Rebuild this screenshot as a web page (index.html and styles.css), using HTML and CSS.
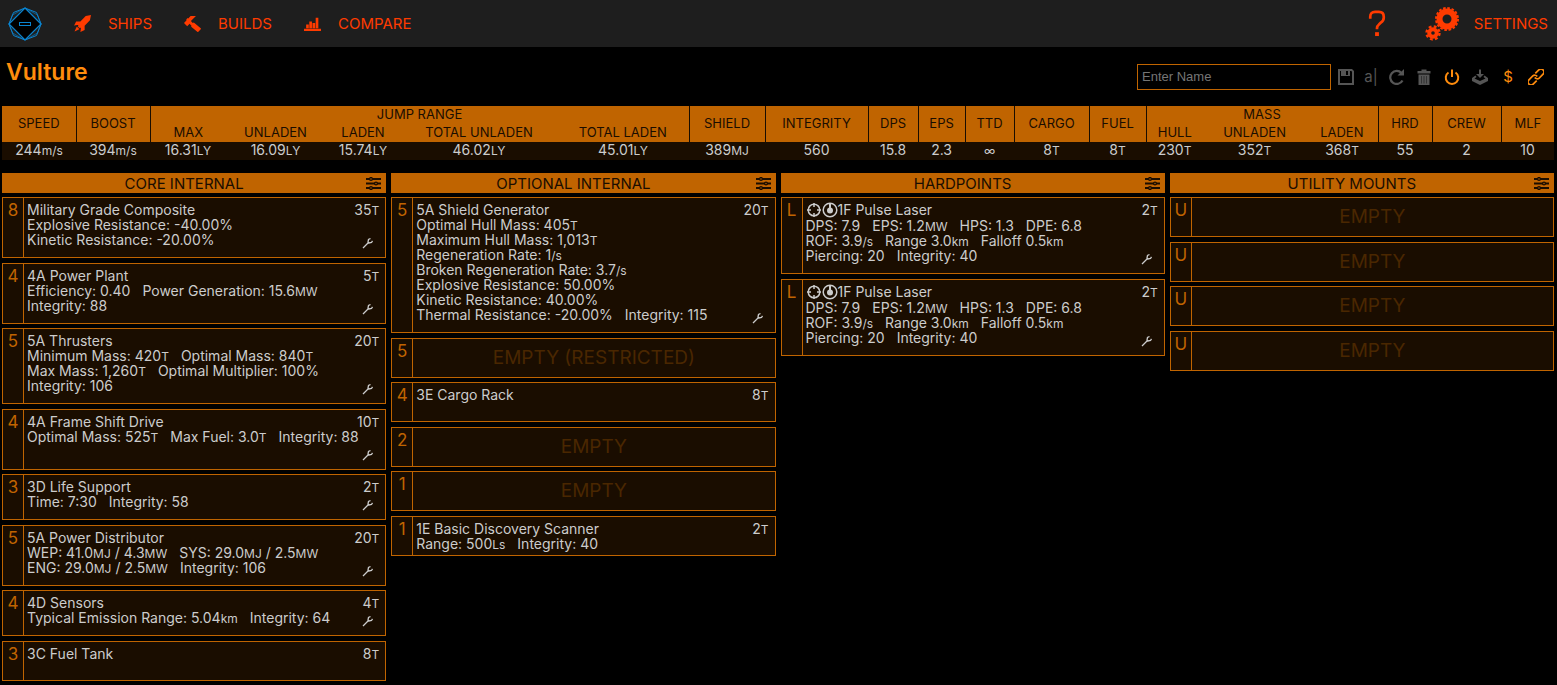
FILE: index.html
```
<!DOCTYPE html>
<html lang="en">
<head>
    <meta charset="utf-8">
    <title>Vulture</title>
    <link rel="stylesheet" href="styles.css">
</head>
<body>
    <!-- Icons -->
    <svg class="sprite" aria-hidden="true">
        <symbol id="i-logo" viewBox="0 0 34 34">
            <path d="M17 1 28.500 5.500 33 17 28.500 28.500 17 33 5.500 28.500 1 17 5.500 5.500Z" fill="none" stroke="#0a84d0"/>
            <path d="M17 1 33 17 17 33 1 17Z" fill="#000" stroke="#0a84d0" stroke-width="1.200"/>
            <path d="M17 1 29.500 8 33 17 29.500 26 17 33 4.500 26 1 17 4.500 8Z" fill="none" stroke="#0a84d0" stroke-width=".6"/>
            <rect x="11.500" y="15.500" width="11" height="3" fill="none" stroke="#0a84d0"/>
        </symbol>
        <symbol id="i-rocket" viewBox="0 0 32 32">
            <path d="M22 2 12 12H4l-4 8s5-1 8.500-1l-1.500 2 4 4 2-1.500C13 27 12 32 12 32l8-4v-8l10-10L32 0Z"/>
            <path d="M5 22 1 31l9-4-2-3Z"/>
        </symbol>
        <symbol id="i-hammer" viewBox="0 0 32 32">
            <path d="M31.500 25 18.500 14l-2 1-3.500-3.500L22.500 2H12.500L8 6.500 7 5.500 4.500 8v2.500L0 15l6 6 4.500-4.500 3.500 3.500-.500 2L25 31.500q1 .8 2 0l4.500-4.500q.8-1 0-2Z"/>
        </symbol>
        <symbol id="i-bars" viewBox="0 0 32 32">
            <path d="M0 26h32v4H0ZM4 18h5v7H4ZM10 12h5v13h-5ZM16 15h5v10h-5ZM22 5h5v20h-5Z"/>
        </symbol>
        <symbol id="i-cogs" viewBox="0 0 34 34">
            <circle cx="22" cy="12" r="7.500" fill="none" stroke="currentColor" stroke-width="6"/>
            <circle cx="22" cy="12" r="11" fill="none" stroke="currentColor" stroke-width="2" stroke-dasharray="2.600 1.720"/>
            <circle cx="8" cy="26" r="3.800" fill="none" stroke="currentColor" stroke-width="4"/>
            <circle cx="8" cy="26" r="6.500" fill="none" stroke="currentColor" stroke-width="2.400" stroke-dasharray="2.800 2.305"/>
        </symbol>
        <symbol id="i-question" viewBox="0 0 18 28">
            <path d="M2 9V7q0-5 5-5h4q5 0 5 5v1q0 3-3 5l-2 2q-2 1.500-2 4v1" fill="none" stroke="currentColor" stroke-width="2.800"/>
            <path d="M7 23h4v4H7Z"/>
        </symbol>
        <symbol id="i-save" viewBox="0 0 32 32">
            <path d="M28 0H0v32h32V4ZM16 4h4v8h-4ZM28 28H4V4h2v10h18V4h2.500L28 5.500Z" fill-rule="evenodd"/>
        </symbol>
        <symbol id="i-reload" viewBox="0 0 32 32">
            <path d="M27 8A13 13 0 1 0 29 23" fill="none" stroke="currentColor" stroke-width="4.500"/>
            <path d="M32 0v13H19Z"/>
        </symbol>
        <symbol id="i-bin" viewBox="0 0 32 32">
            <path d="M3 4h8V1h10v3h8v5H3ZM5 11h22v21H5Z"/>
            <path d="M11 14v15M16 14v15M21 14v15" stroke="#333" stroke-width="2"/>
        </symbol>
        <symbol id="i-power" viewBox="0 0 32 32">
            <path d="M9 7a12.500 12.500 0 1 0 14 0M16 1v15" fill="none" stroke="currentColor" stroke-width="4"/>
        </symbol>
        <symbol id="i-download" viewBox="0 0 32 32">
            <path d="M14 1h4v9h6l-8 8-8-8h6Z"/>
            <path d="M0 18 7 13l2 3-4 3 11 5 11-5-4-3 2-3 7 5v6l-16 8L0 24Z"/>
        </symbol>
        <symbol id="i-link" viewBox="0 0 32 32">
            <g transform="rotate(-45 16 16)" fill="none" stroke="currentColor" stroke-width="3.400">
                <path d="M12 22H2a6 6 0 0 1 0-12h11a6 6 0 0 1 5.500 7"/>
                <path d="M20 10h10a6 6 0 0 1 0 12H19a6 6 0 0 1-5.500-7"/>
            </g>
        </symbol>
        <symbol id="i-sliders" viewBox="0 0 15 13">
            <path d="M0 2h15M0 6.500h15M0 11h15" stroke="currentColor" stroke-width="2"/>
            <g fill="#c06400" stroke="currentColor" stroke-width="1.400"><circle cx="5" cy="2" r="1.400"/><circle cx="10" cy="6.500" r="1.400"/><circle cx="5" cy="11" r="1.400"/></g>
        </symbol>
        <symbol id="i-wrench" viewBox="0 0 12 12">
            <path d="M1 11 6.500 5.500M8.500 1.500 6.500 2.500 6 5 7 6 9.500 5.500 10.500 3.800" fill="none" stroke="currentColor" stroke-width="1.300"/>
        </symbol>
        <symbol id="i-gimbal" viewBox="0 0 16 16">
            <path d="M8 1v4M8 11v4M1 8h4M11 8h4" stroke="currentColor" stroke-width="1.500"/>
            <circle cx="8" cy="8" r="5.800" fill="none" stroke="currentColor" stroke-width="1.500"/>
        </symbol>
        <symbol id="i-thermal" viewBox="0 0 16 16">
            <circle cx="8" cy="8" r="6.800" fill="none" stroke="currentColor" stroke-width="1.500"/>
            <circle cx="8" cy="8.500" r="3"/>
            <path d="M7 2h2v5H7Z"/>
        </symbol>
    </svg>

    <header>
        <a class="logo" href="#" aria-label="Home"><svg><use href="#i-logo"/></svg></a>
        <nav>
            <a href="#"><svg><use href="#i-rocket"/></svg>SHIPS</a>
            <a href="#"><svg><use href="#i-hammer"/></svg>BUILDS</a>
            <a href="#"><svg><use href="#i-bars"/></svg>COMPARE</a>
        </nav>
        <a class="help" href="#" aria-label="Help"><svg><use href="#i-question"/></svg></a>
        <a class="settings" href="#"><svg><use href="#i-cogs"/></svg>SETTINGS</a>
    </header>

    <div class="overview">
        <h1>Vulture</h1>
        <div class="build">
            <input type="text" placeholder="Enter Name" aria-label="Build name">
            <button disabled aria-label="Save"><svg><use href="#i-save"/></svg></button>
            <button disabled class="rename">a|</button>
            <button disabled aria-label="Reload"><svg><use href="#i-reload"/></svg></button>
            <button disabled aria-label="Delete"><svg><use href="#i-bin"/></svg></button>
            <button aria-label="Power"><svg><use href="#i-power"/></svg></button>
            <button disabled aria-label="Export"><svg><use href="#i-download"/></svg></button>
            <button>$</button>
            <button aria-label="Link"><svg><use href="#i-link"/></svg></button>
        </div>
    </div>

    <table class="summary">
        <colgroup>
            <col class="w74"><col class="w74"><col class="w76"><col class="w99"><col class="w76"><col class="w156"><col class="w132">
            <col class="w76"><col class="w103"><col class="w50"><col class="w47"><col class="w49"><col class="w75"><col class="w57">
            <col class="w57"><col class="w103"><col class="w72"><col class="w54"><col class="w69"><col class="w53">
        </colgroup>
        <thead>
            <tr>
                <th rowspan="2">SPEED</th>
                <th rowspan="2">BOOST</th>
                <th colspan="5">JUMP RANGE</th>
                <th rowspan="2">SHIELD</th>
                <th rowspan="2">INTEGRITY</th>
                <th rowspan="2">DPS</th>
                <th rowspan="2">EPS</th>
                <th rowspan="2">TTD</th>
                <th rowspan="2">CARGO</th>
                <th rowspan="2">FUEL</th>
                <th colspan="3">MASS</th>
                <th rowspan="2">HRD</th>
                <th rowspan="2">CREW</th>
                <th rowspan="2">MLF</th>
            </tr>
            <tr class="sub">
                <th class="first">MAX</th><th>UNLADEN</th><th>LADEN</th><th>TOTAL UNLADEN</th><th>TOTAL LADEN</th>
                <th class="first">HULL</th><th>UNLADEN</th><th>LADEN</th>
            </tr>
        </thead>
        <tbody>
            <tr>
                <td>244<u>m/s</u></td><td>394<u>m/s</u></td>
                <td>16.31<u>LY</u></td><td>16.09<u>LY</u></td><td>15.74<u>LY</u></td><td>46.02<u>LY</u></td><td>45.01<u>LY</u></td>
                <td>389<u>MJ</u></td><td>560</td><td>15.8</td><td>2.3</td><td><u>∞</u></td>
                <td>8<u>T</u></td><td>8<u>T</u></td>
                <td>230<u>T</u></td><td>352<u>T</u></td><td>368<u>T</u></td>
                <td>55</td><td>2</td><td>10</td>
            </tr>
        </tbody>
    </table>

    <main>
        <section>
            <h2><span>CORE INTERNAL</span><button aria-label="Core internal options"><svg><use href="#i-sliders"/></svg></button></h2>
            <div class="slot">
                <div class="size">8</div>
                <div class="details">
                    <div class="name"><span>Military Grade Composite</span><span>35<u>T</u></span></div>
                    <div class="stats"><span>Explosive Resistance: -40.00%</span><span>Kinetic Resistance: -20.00%</span><button aria-label="Modify"><svg><use href="#i-wrench"/></svg></button></div>
                </div>
            </div>
            <div class="slot">
                <div class="size">4</div>
                <div class="details">
                    <div class="name"><span>4A Power Plant</span><span>5<u>T</u></span></div>
                    <div class="stats"><span>Efficiency: 0.40</span><span>Power Generation: 15.6<u>MW</u></span><span>Integrity: 88</span><button aria-label="Modify"><svg><use href="#i-wrench"/></svg></button></div>
                </div>
            </div>
            <div class="slot">
                <div class="size">5</div>
                <div class="details">
                    <div class="name"><span>5A Thrusters</span><span>20<u>T</u></span></div>
                    <div class="stats"><span>Minimum Mass: 420<u>T</u></span><span>Optimal Mass: 840<u>T</u></span><span>Max Mass: 1,260<u>T</u></span><span>Optimal Multiplier: 100%</span><span>Integrity: 106</span><button aria-label="Modify"><svg><use href="#i-wrench"/></svg></button></div>
                </div>
            </div>
            <div class="slot">
                <div class="size">4</div>
                <div class="details">
                    <div class="name"><span>4A Frame Shift Drive</span><span>10<u>T</u></span></div>
                    <div class="stats"><span>Optimal Mass: 525<u>T</u></span><span>Max Fuel: 3.0<u>T</u></span><span>Integrity: 88</span><button aria-label="Modify"><svg><use href="#i-wrench"/></svg></button></div>
                </div>
            </div>
            <div class="slot">
                <div class="size">3</div>
                <div class="details">
                    <div class="name"><span>3D Life Support</span><span>2<u>T</u></span></div>
                    <div class="stats"><span>Time: 7:30</span><span>Integrity: 58</span><button aria-label="Modify"><svg><use href="#i-wrench"/></svg></button></div>
                </div>
            </div>
            <div class="slot">
                <div class="size">5</div>
                <div class="details">
                    <div class="name"><span>5A Power Distributor</span><span>20<u>T</u></span></div>
                    <div class="stats"><span>WEP: 41.0<u>MJ</u> / 4.3<u>MW</u></span><span>SYS: 29.0<u>MJ</u> / 2.5<u>MW</u></span><span>ENG: 29.0<u>MJ</u> / 2.5<u>MW</u></span><span>Integrity: 106</span><button aria-label="Modify"><svg><use href="#i-wrench"/></svg></button></div>
                </div>
            </div>
            <div class="slot">
                <div class="size">4</div>
                <div class="details">
                    <div class="name"><span>4D Sensors</span><span>4<u>T</u></span></div>
                    <div class="stats"><span>Typical Emission Range: 5.04<u>km</u></span><span>Integrity: 64</span><button aria-label="Modify"><svg><use href="#i-wrench"/></svg></button></div>
                </div>
            </div>
            <div class="slot">
                <div class="size">3</div>
                <div class="details">
                    <div class="name"><span>3C Fuel Tank</span><span>8<u>T</u></span></div>
                </div>
            </div>
        </section>

        <section>
            <h2><span>OPTIONAL INTERNAL</span><button aria-label="Optional internal options"><svg><use href="#i-sliders"/></svg></button></h2>
            <div class="slot">
                <div class="size">5</div>
                <div class="details">
                    <div class="name"><span>5A Shield Generator</span><span>20<u>T</u></span></div>
                    <div class="stats"><span>Optimal Hull Mass: 405<u>T</u></span><br><span>Maximum Hull Mass: 1,013<u>T</u></span><br><span>Regeneration Rate: 1<u>/s</u></span><br><span>Broken Regeneration Rate: 3.7<u>/s</u></span><br><span>Explosive Resistance: 50.00%</span><br><span>Kinetic Resistance: 40.00%</span><br><span>Thermal Resistance: -20.00%</span><span>Integrity: 115</span><button aria-label="Modify"><svg><use href="#i-wrench"/></svg></button></div>
                </div>
            </div>
            <div class="slot">
                <div class="size">5</div>
                <div class="empty">EMPTY (RESTRICTED)</div>
            </div>
            <div class="slot">
                <div class="size">4</div>
                <div class="details">
                    <div class="name"><span>3E Cargo Rack</span><span>8<u>T</u></span></div>
                </div>
            </div>
            <div class="slot">
                <div class="size">2</div>
                <div class="empty">EMPTY</div>
            </div>
            <div class="slot">
                <div class="size">1</div>
                <div class="empty">EMPTY</div>
            </div>
            <div class="slot">
                <div class="size">1</div>
                <div class="details compact">
                    <div class="name"><span>1E Basic Discovery Scanner</span><span>2<u>T</u></span></div>
                    <div class="stats"><span>Range: 500<u>Ls</u></span><span>Integrity: 40</span></div>
                </div>
            </div>
        </section>

        <section>
            <h2><span>HARDPOINTS</span><button aria-label="Hardpoint options"><svg><use href="#i-sliders"/></svg></button></h2>
            <div class="slot">
                <div class="size">L</div>
                <div class="details">
                    <div class="name weapon"><span><svg><use href="#i-gimbal"/></svg><svg><use href="#i-thermal"/></svg>1F Pulse Laser</span><span>2<u>T</u></span></div>
                    <div class="stats"><span>DPS: 7.9</span><span>EPS: 1.2<u>MW</u></span><span>HPS: 1.3</span><span>DPE: 6.8</span><br><span>ROF: 3.9<u>/s</u></span><span>Range 3.0<u>km</u></span><span>Falloff 0.5<u>km</u></span><br><span>Piercing: 20</span><span>Integrity: 40</span><button aria-label="Modify"><svg><use href="#i-wrench"/></svg></button></div>
                </div>
            </div>
            <div class="slot">
                <div class="size">L</div>
                <div class="details">
                    <div class="name weapon"><span><svg><use href="#i-gimbal"/></svg><svg><use href="#i-thermal"/></svg>1F Pulse Laser</span><span>2<u>T</u></span></div>
                    <div class="stats"><span>DPS: 7.9</span><span>EPS: 1.2<u>MW</u></span><span>HPS: 1.3</span><span>DPE: 6.8</span><br><span>ROF: 3.9<u>/s</u></span><span>Range 3.0<u>km</u></span><span>Falloff 0.5<u>km</u></span><br><span>Piercing: 20</span><span>Integrity: 40</span><button aria-label="Modify"><svg><use href="#i-wrench"/></svg></button></div>
                </div>
            </div>
        </section>

        <section>
            <h2><span>UTILITY MOUNTS</span><button aria-label="Utility mount options"><svg><use href="#i-sliders"/></svg></button></h2>
            <div class="slot">
                <div class="size">U</div>
                <div class="empty">EMPTY</div>
            </div>
            <div class="slot">
                <div class="size">U</div>
                <div class="empty">EMPTY</div>
            </div>
            <div class="slot">
                <div class="size">U</div>
                <div class="empty">EMPTY</div>
            </div>
            <div class="slot">
                <div class="size">U</div>
                <div class="empty">EMPTY</div>
            </div>
        </section>
    </main>
</body>
</html>
```
FILE: styles.css
```
:root {
    --bg: #000;
    --panel: #1a0d00;
    --orange: #c06400;
    --orange-light: #ff8c0d;
    --red: #ff3b00;
    --text: #ccc;
    --disabled: #555;
}

* {
    margin: 0;
    padding: 0;
    box-sizing: border-box;
}

body {
    background: var(--bg);
    color: var(--text);
    font-family: Inter, Roboto, sans-serif;
    font-size: 14px;
    line-height: 15px;
}

svg {
    display: block;
    fill: currentColor;
}

.sprite {
    display: none;
}

u {
    font-size: 12px;
    line-height: 0;
    text-decoration: none;
}

a {
    color: inherit;
    text-decoration: none;
}

button {
    background: none;
    border: none;
    color: inherit;
    font: inherit;
    cursor: pointer;
}

/* Top bar */
header {
    display: flex;
    align-items: center;
    height: 47px;
    padding: 0 9px 0 8px;
    background: #1e1e1e;
    color: var(--red);
    font-size: 15px;
}

.logo svg {
    width: 34px;
    height: 34px;
}

nav {
    display: flex;
    flex: 1;
    gap: 32px;
    padding-left: 32px;
}

nav a,
.settings {
    display: flex;
    align-items: center;
}

nav a {
    gap: 17px;
}

nav svg {
    width: 17px;
    height: 17px;
}

.help svg {
    width: 18px;
    height: 27px;
}

.settings {
    gap: 15px;
    padding-left: 39px;
}

.settings svg {
    width: 34px;
    height: 34px;
}

/* Ship name and build actions */
.overview {
    display: flex;
    justify-content: space-between;
    align-items: center;
    height: 59px;
    padding: 0 7px 0 6px;
}

h1 {
    color: var(--orange-light);
    font-size: 23px;
    font-weight: 600;
    line-height: 28px;
    padding-bottom: 10px;
}

.build {
    display: flex;
    align-items: center;
    color: var(--orange-light);
}

.build input {
    width: 194px;
    height: 26px;
    margin-right: 1px;
    padding: 0 4px;
    background: var(--bg);
    border: 1px solid var(--orange);
    color: var(--text);
    font-family: "Liberation Sans", sans-serif;
    font-size: 13px;
}

.build input::placeholder {
    color: #757575;
}

.build button {
    display: flex;
    justify-content: center;
    width: 28px;
    font-size: 15px;
}

.build .rename {
    width: 22px;
}

.build button:disabled {
    color: var(--disabled);
    cursor: default;
}

.build svg {
    width: 16px;
    height: 16px;
    overflow: visible;
}

/* Summary table */
.summary {
    width: calc(100% - 5px);
    margin: 0 3px 0 2px;
    table-layout: fixed;
    border-collapse: collapse;
    text-align: center;
}

.summary th {
    height: 18px;
    padding-bottom: 2px;
    background: var(--orange);
    border-left: 1px solid var(--panel);
    color: var(--panel);
    font-size: 13px;
    font-weight: 400;
}

.summary th:first-child,
.summary .sub th {
    border-left: none;
}

.summary .sub .first {
    border-left: 1px solid var(--panel);
}

.summary td {
    height: 18px;
    padding-bottom: 3px;
    background: var(--panel);
    white-space: nowrap;
}

.w47 { width: 47px; }
.w49 { width: 49px; }
.w50 { width: 50px; }
.w53 { width: 53px; }
.w54 { width: 54px; }
.w57 { width: 57px; }
.w69 { width: 69px; }
.w72 { width: 72px; }
.w74 { width: 74px; }
.w75 { width: 75px; }
.w76 { width: 76px; }
.w99 { width: 99px; }
.w103 { width: 103px; }
.w132 { width: 132px; }
.w156 { width: 156px; }

/* Slot groups */
main {
    display: grid;
    grid-template-columns: repeat(4, 1fr);
    gap: 5px;
    align-items: start;
    padding: 13px 3px 3px 2px;
}

h2 {
    display: flex;
    align-items: center;
    height: 20px;
    margin-bottom: 4px;
    padding-right: 5px;
    background: var(--orange);
    color: var(--panel);
    font-size: 15px;
    font-weight: 400;
}

h2 span {
    flex: 1;
    text-align: center;
}

h2 svg {
    width: 15px;
    height: 13px;
}

.slot {
    display: flex;
    min-height: 40px;
    margin-bottom: 5px;
    background: var(--panel);
    border: 1px solid var(--orange);
}

.slot:nth-child(odd) {
    margin-bottom: 4px;
}

.size {
    width: 21px;
    padding-top: 5px;
    border-right: 1px solid var(--orange);
    color: var(--orange);
    font-size: 17px;
    text-align: center;
}

.details {
    flex: 1;
    padding: 4px 6px 10px 3px;
}

.compact {
    padding-bottom: 4px;
}

.name {
    display: flex;
    justify-content: space-between;
}

.weapon span:first-child {
    display: flex;
    height: 16px;
}

.weapon svg {
    width: 16px;
    height: 16px;
}

.stats {
    display: flow-root;
    margin-bottom: -2px;
}

.stats span {
    display: inline-block;
    margin-right: 12px;
    vertical-align: top;
}

.stats button {
    display: flex;
    align-items: flex-end;
    float: right;
    height: 17px;
    padding: 0 5px;
}

.stats svg {
    width: 12px;
    height: 12px;
}

.empty {
    flex: 1;
    align-self: center;
    color: #4a2700;
    font-size: 19px;
    line-height: 22px;
    text-align: center;
}
```
